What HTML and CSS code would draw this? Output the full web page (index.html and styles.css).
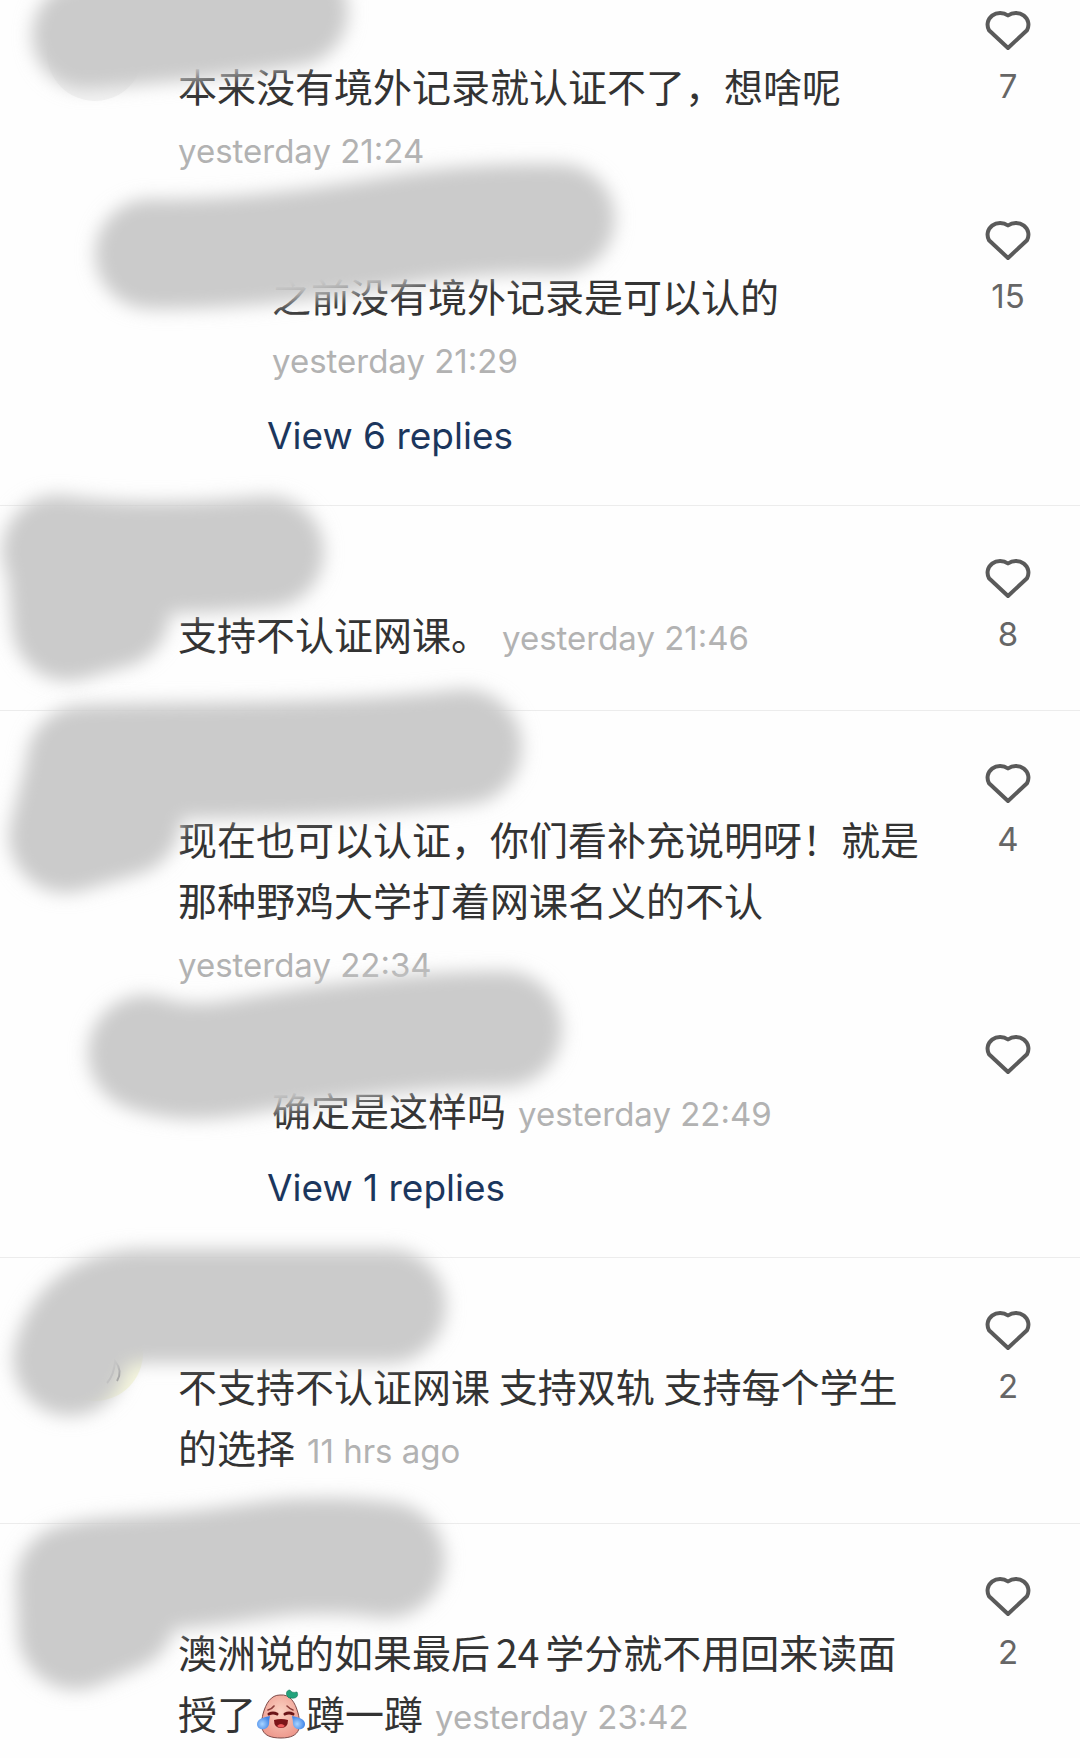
FILE: index.html
```
<!DOCTYPE html>
<html lang="zh-CN">
<head>
  <meta charset="UTF-8" />
  <meta name="viewport" content="width=device-width, initial-scale=1.0"/>
  <title>Comments</title>
  <link rel="stylesheet" href="styles.css">
</head>
<body>

  <!-- Shared shapes -->
  <svg class="defs" aria-hidden="true">
    <defs>
      <filter id="soft" filterUnits="userSpaceOnUse" x="-60" y="-120" width="760" height="640">
        <feGaussianBlur stdDeviation="9"/>
      </filter>
      <symbol id="heart" viewBox="0 0 48 48">
        <path d="M24 43 L5 25.2 A12.6 11.8 0 0 1 24 10.5 A12.6 11.8 0 0 1 43 25.2 Z" fill="none" stroke="#5a5a5a" stroke-width="4" stroke-linejoin="round"/>
      </symbol>
    </defs>
  </svg>

  <main class="comments">

    <article class="comment">
      <div class="avatar"></div>
      <div class="row">
        <div class="body">
          <p class="text">本来没有境外记录就认证不了，想啥呢</p>
          <time class="time">yesterday 21:24</time>
        </div>
        <button class="like" aria-label="Like"><svg><use href="#heart"/></svg><span>7</span></button>
      </div>
      <div class="row reply">
        <div class="body">
          <p class="text">之前没有境外记录是可以认的</p>
          <time class="time">yesterday 21:29</time>
          <button class="more">View 6 replies</button>
        </div>
        <button class="like" aria-label="Like"><svg><use href="#heart"/></svg><span>15</span></button>
      </div>
      <svg class="smudge" aria-hidden="true">
        <g filter="url(#soft)">
          <path stroke-width="108" d="M86 35 C160 29 220 24 294 12"/>
          <path stroke-width="110" d="M150 254 C240 256 340 240 400 230 S520 218 560 219"/>
        </g>
      </svg>
    </article>

    <article class="comment">
      <div class="avatar"></div>
      <div class="row">
        <div class="body">
          <p class="text">支持不认证网课。<time class="time-inline">yesterday 21:46</time></p>
        </div>
        <button class="like" aria-label="Like"><svg><use href="#heart"/></svg><span>8</span></button>
      </div>
      <svg class="smudge" aria-hidden="true">
        <g filter="url(#soft)">
          <path stroke-width="112" d="M58 45 Q140 58 268 46"/>
          <path stroke-width="112" d="M62 50 L68 119 L114 106"/>
        </g>
      </svg>
    </article>

    <article class="comment">
      <div class="avatar"></div>
      <div class="row">
        <div class="body">
          <p class="text">现在也可以认证，你们看补充说明呀！就是那种野鸡大学打着网课名义的不认</p>
          <time class="time">yesterday 22:34</time>
        </div>
        <button class="like" aria-label="Like"><svg><use href="#heart"/></svg><span>4</span></button>
      </div>
      <div class="row reply">
        <div class="body">
          <p class="text">确定是这样吗<time class="time-inline">yesterday 22:49</time></p>
          <button class="more">View 1 replies</button>
        </div>
        <button class="like" aria-label="Like"><svg><use href="#heart"/></svg></button>
      </div>
      <svg class="smudge" aria-hidden="true">
        <g filter="url(#soft)">
          <path stroke-width="116" d="M84 52 C200 48 330 52 464 36"/>
          <path stroke-width="114" d="M84 54 L66 125 L124 108"/>
          <path stroke-width="116" d="M146 342 Q184 356 240 346 C330 330 420 318 504 318"/>
        </g>
      </svg>
    </article>

    <article class="comment">
      <div class="avatar avatar-yellow">
        <svg viewBox="0 0 96 96"><path d="M60 78 Q67 70 68 56 Q76 66 70 76" fill="none" stroke="#555" stroke-width="2"/></svg>
      </div>
      <div class="row">
        <div class="body">
          <p class="text">不支持不认证网课 支持双轨 支持每个学生的选择<time class="time-inline">11 hrs ago</time></p>
        </div>
        <button class="like" aria-label="Like"><svg><use href="#heart"/></svg><span>2</span></button>
      </div>
      <svg class="smudge" aria-hidden="true">
        <g filter="url(#soft)">
          <path stroke-width="114" d="M70 101 C80 64 106 50 140 48 L389 48"/>
        </g>
      </svg>
    </article>

    <article class="comment">
      <div class="avatar"></div>
      <div class="row">
        <div class="body">
          <p class="text">澳洲说的如果最后<span class="num">24</span>学分就不用回来读面授了<svg class="emoji" viewBox="0 0 48 50" role="img" aria-label="laughing with tears">
              <defs>
                <radialGradient id="skin" cx="50%" cy="40%" r="60%">
                  <stop offset="0" stop-color="#fbd3c4"/>
                  <stop offset="1" stop-color="#ee9a8e"/>
                </radialGradient>
                <radialGradient id="tear" cx="40%" cy="60%" r="60%">
                  <stop offset="0" stop-color="#a9d4ff"/>
                  <stop offset="1" stop-color="#3f84e8"/>
                </radialGradient>
              </defs>
              <path d="M23 6 C33 5 38 13 41 24 C44 36 45 49 24 49 C3 49 3 38 6 25 C9 14 14 6 23 6Z" fill="url(#skin)" stroke="#7d4a48" stroke-width="1"/>
              <path d="M32 9 C28 6 29 1 33 1 C34 3 36 4 40 3 C42 7 39 10 34 9Z" fill="#22a37c" stroke="#14765a" stroke-width="0.6"/>
              <path d="M11 21 Q15 20 17 17 M30 17 Q33 20 36 21" fill="none" stroke="#8c3d3a" stroke-width="1.6" stroke-linecap="round"/>
              <path d="M12 25 Q16 23 20 25 M28 25 Q32 23 36 25" fill="none" stroke="#6a1518" stroke-width="3" stroke-linecap="round"/>
              <path d="M17 31 Q24 29 31 31 Q31 39 24 39 Q17 39 17 31Z" fill="#7c1418"/>
              <path d="M20 37 Q24 33 28 37 Q24 40 20 37Z" fill="#ef5b5b"/>
              <path d="M13 27 C7 28 0 30 0 35 C0 42 11 42 12 35 Q12 31 13 27Z" fill="url(#tear)"/>
              <path d="M35 27 C41 28 48 30 48 35 C48 42 37 42 36 35 Q36 31 35 27Z" fill="url(#tear)"/>
            </svg>蹲一蹲<time class="time-inline">yesterday 23:42</time></p>
        </div>
        <button class="like" aria-label="Like"><svg><use href="#heart"/></svg><span>2</span></button>
      </div>
      <svg class="smudge" aria-hidden="true">
        <g filter="url(#soft)">
          <path stroke-width="116" d="M74 60 C90 48 150 52 220 42 S290 32 330 32 S376 36 387 36"/>
          <path stroke-width="116" d="M74 58 L76 108 L118 90"/>
        </g>
      </svg>
    </article>

  </main>

</body>
</html>
```
FILE: styles.css
```
* {
  box-sizing: border-box;
}
body {
  margin: 0;
  background-color: #fefefe;
  color: #333333;
  font-family: Inter, "Noto Sans CJK SC", sans-serif;
  overflow-x: hidden;
}
button {
  padding: 0;
  border: none;
  background: none;
  font-family: inherit;
  cursor: pointer;
}
.defs {
  position: absolute;
  width: 0;
  height: 0;
}
.comments {
  overflow: hidden;
}
.comment {
  position: relative;
  padding: 42px 0 43px;
  border-top: 1px solid #ececec;
}
.comment:first-child {
  padding-top: 0;
  border-top: none;
}
.comment:last-child {
  padding-bottom: 11px;
}
.row {
  display: flex;
  gap: 16px;
  padding-left: 178px;
  padding-right: 12px;
}
.reply {
  margin-top: 29px;
  padding-left: 272px;
}
/* room for the user name above the text */
.body {
  flex: 1;
  padding-top: 55px;
}
.text {
  margin: 0;
  padding-bottom: 3px;
  font-family: "Noto Sans CJK SC", sans-serif;
  font-size: 39px;
  line-height: 61px;
}
.num {
  margin: 0 6px;
}
.time {
  display: block;
  margin-top: 3px;
  font-size: 33px;
  line-height: 59px;
  color: #b2b2b2;
}
.time-inline {
  margin-left: 12px;
  font-family: Inter, sans-serif;
  font-size: 33px;
  line-height: 33px;
  color: #b2b2b2;
}
.more {
  display: block;
  margin-top: 19px;
  margin-left: -5px;
  font-size: 37px;
  line-height: 52px;
  color: #1b365d;
}
.like {
  display: flex;
  flex-direction: column;
  align-items: center;
  align-self: flex-start;
  width: 120px;
  padding-top: 5px;
  font-size: 33px;
  line-height: 60px;
  color: #666666;
}
.like svg {
  width: 48px;
  height: 48px;
}
.like span {
  margin-top: 3px;
}
.avatar {
  position: absolute;
  top: 47px;
  left: 47px;
  width: 96px;
  height: 96px;
  border-radius: 50%;
  background-color: #f3f3f3;
}
.comment:first-child .avatar {
  top: 5px;
}
.avatar-yellow {
  background-color: #f7f8de;
}
.emoji {
  width: 48px;
  height: 50px;
  margin: -8px 1px;
  vertical-align: -2px;
}
/* grey brush over avatar and name */
.smudge {
  position: absolute;
  top: 0;
  left: 0;
  width: 640px;
  height: 100%;
  overflow: visible;
  pointer-events: none;
  fill: none;
  stroke: #cbcbcb;
  stroke-linecap: round;
  stroke-linejoin: round;
}
```
